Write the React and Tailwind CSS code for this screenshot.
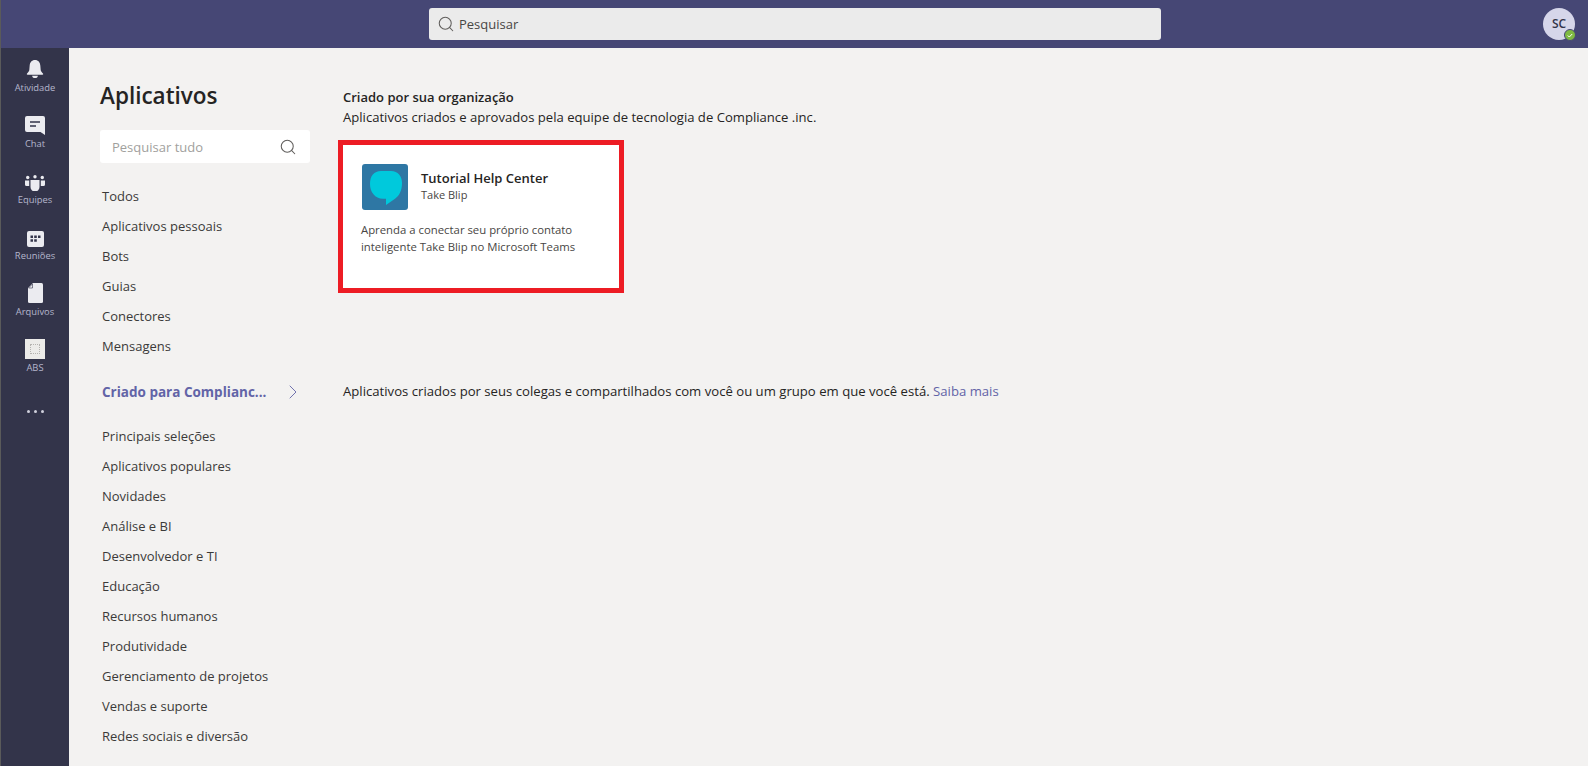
import React from "react";
import { Search, ChevronRight } from "lucide-react";

const Bell = () => (
  <svg width="18" height="19" viewBox="0 0 18 20" fill="#ebebf0"><path d="M9 0C5.600 0 3.600 2.600 3.400 5.800L3 10.500C2.900 12 1.600 13 .6 14.200c-.5.6-.3 1.300.5 1.300h15.800c.8 0 1-.7.5-1.300C16.400 13 15.100 12 15 10.500l-.4-4.700C14.400 2.600 12.400 0 9 0z"/><path d="M6 16.500h6c0 1.600-1.200 2.500-3 2.500s-3-.9-3-2.500z"/></svg>
);
const Chat = () => (
  <svg width="20" height="19" viewBox="0 0 20 19"><path d="M2 0h16a2 2 0 0 1 2 2v17l-4.500-3H2a2 2 0 0 1-2-2V2a2 2 0 0 1 2-2z" fill="#ebebf0"/><path d="M5 6h10M5 10h6" stroke="#33344a" strokeWidth="1.300"/></svg>
);
const Teams = () => (
  <svg width="20" height="16" viewBox="0 0 20 16" fill="#ebebf0"><circle cx="2.700" cy="2.500" r="1.700"/><circle cx="10" cy="1.700" r="1.700"/><circle cx="17.300" cy="2.500" r="1.700"/><path d="M0 5.500h4.200v5.500H1.500A1.500 1.500 0 0 1 0 9.500zM15.800 5.500H20v4a1.500 1.500 0 0 1-1.500 1.500h-2.700z"/><path d="M5.500 5h9v7a4.500 4.500 0 0 1-9 0z"/></svg>
);
const Calendar = () => (
  <svg width="17" height="17" viewBox="0 0 17 17" fill="none"><rect x="0" y="1" width="17" height="16" rx="2" fill="#ebebf0"/><path d="M3.500 5.500h2.500v2.500H3.500zM7.200 5.500h2.600v2.500H7.200zM11 5.500h2.500v2.500H11zM3.500 9.200h2.500v2.600H3.500zM7.200 9.200h2.600v2.600H7.200z" fill="#33344a"/></svg>
);
const File = () => (
  <svg width="15" height="20" viewBox="0 0 15 20"><path d="M5 0h8.500A1.500 1.500 0 0 1 15 1.500v17a1.500 1.500 0 0 1-1.500 1.500h-12A1.500 1.500 0 0 1 0 18.500V5z" fill="#ebebf0"/><path d="M4.500 1v4h-4z" fill="#ebebf0" stroke="#33344a" strokeWidth=".6"/></svg>
);
const Abs = () => (
  <div className="w-5 h-5 bg-[#ecebe9] flex items-center justify-center">
    <div className="w-[10px] h-[10px] border border-dotted border-[#b5b3b0]"></div>
  </div>
);

const RailItem = ({ icon, label }) => (
  <div className="h-[56px] flex flex-col items-center justify-start">
    <div className="h-[20px] flex items-end justify-center">{icon}</div>
    <span className="mt-[2px] text-[9.400px] leading-[14px] text-[#b5b6cc]">{label}</span>
  </div>
);

const Nav = ({ children }) => (
  <div className="h-[30px] flex items-center pl-[2px] text-[13px] text-[#3b3a39]">{children}</div>
);

export default function App() {
  const top = ["Todos", "Aplicativos pessoais", "Bots", "Guias", "Conectores", "Mensagens"];
  const cats = ["Principais seleções", "Aplicativos populares", "Novidades", "Análise e BI", "Desenvolvedor e TI", "Educação", "Recursos humanos", "Produtividade", "Gerenciamento de projetos", "Vendas e suporte", "Redes sociais e diversão"];
  return (
    <div className="w-[1588px] h-[766px] overflow-hidden flex flex-col bg-[#f3f2f1] font-['Open_Sans',sans-serif]">
      <header className="h-[48px] shrink-0 bg-[#464775] border-l border-[#5a5a5a] flex items-center relative">
        <div className="ml-[428px] w-[732px] h-[32px] bg-[#ebebeb] rounded-[3px] flex items-center pl-[8px] gap-[4px]">
          <Search size={18} strokeWidth={1.400} className="text-[#605e5c]" />
          <span className="text-[13px] leading-[20px] text-[#484644]">Pesquisar</span>
        </div>
        <div className="absolute right-[13px] top-[8px] w-8 h-8 rounded-full bg-[#d6d6ea] flex items-center justify-center text-[12px] font-semibold text-[#33344a]">
          SC
          <div className="absolute right-[-1px] bottom-[-1px] w-[12px] h-[12px] rounded-full bg-[#7fba42] border border-[#464775] flex items-center justify-center">
            <svg width="6" height="5" viewBox="0 0 6 5" fill="none"><path d="M.8 2.500l1.500 1.500L5.200 1" stroke="#fff" strokeWidth="1"/></svg>
          </div>
        </div>
      </header>
      <div className="flex-1 flex min-h-0">
        <nav className="w-[69px] shrink-0 bg-[#33344a] border-l border-[#5a5a5a] pt-[11px] flex flex-col">
          <RailItem icon={<Bell />} label="Atividade" />
          <RailItem icon={<Chat />} label="Chat" />
          <RailItem icon={<Teams />} label="Equipes" />
          <RailItem icon={<Calendar />} label="Reuniões" />
          <RailItem icon={<File />} label="Arquivos" />
          <RailItem icon={<Abs />} label="ABS" />
          <div className="mt-[15px] flex justify-center gap-[4px]">
            <span className="w-[3px] h-[3px] rounded-full bg-[#d0d0dc]"></span>
            <span className="w-[3px] h-[3px] rounded-full bg-[#d0d0dc]"></span>
            <span className="w-[3px] h-[3px] rounded-full bg-[#d0d0dc]"></span>
          </div>
        </nav>
        <aside className="w-[274px] shrink-0 pl-[31px] pt-[30px]">
          <h1 className="text-[22.500px] leading-[36px] font-semibold text-[#252423]">Aplicativos</h1>
          <div className="mt-[16px] w-[210px] h-[33px] bg-white rounded-[3px] flex items-center justify-between pl-[12px] pr-[13px]">
            <span className="text-[13px] leading-[20px] pt-[1px] text-[#a19f9d]">Pesquisar tudo</span>
            <Search size={18} strokeWidth={1.400} className="text-[#605e5c]" />
          </div>
          <div className="mt-[19px]">
            {top.map((t) => <Nav key={t}>{t}</Nav>)}
          </div>
          <div className="mt-[15px] h-[30px] flex items-center pl-[2px] w-[205px] justify-between text-[13.500px] font-bold text-[#6264a7]">
            <span>Criado para Complianc...</span>
            <ChevronRight size={24} strokeWidth={0.900} className="text-[#6264a7]" />
          </div>
          <div className="mt-[15px]">
            {cats.map((t) => <Nav key={t}>{t}</Nav>)}
          </div>
        </aside>
        <main className="flex-1 pt-[39px]">
          <div className="text-[13px] leading-[20px] font-semibold text-[#252423]">Criado por sua organização</div>
          <div className="text-[13.100px] leading-[20px] text-[#252423]">Aplicativos criados e aprovados pela equipe de tecnologia de Compliance .inc.</div>
          <div className="mt-[13px] -ml-[5px] w-[286px] h-[153px] border-[5px] border-[#ed1c24] bg-white pl-[19px] pt-[19px]">
            <div className="flex items-center gap-[13px]">
              <div className="w-[46px] h-[46px] rounded-[3px] bg-[#2e77a4] flex items-start justify-start pl-[8px] pt-[6px]">
                <svg width="32" height="35" viewBox="0 0 32 35"><path d="M11 1h10C28 1 32 6 32 13c0 8-3 13-7 15.700L16 35v-6.300h-3C5 28.700 0 22 0 14 0 6 4 1 11 1z" fill="#00c9dc"/></svg>
              </div>
              <div className="-mt-[2px]">
                <div className="text-[13px] leading-[18px] font-semibold text-[#252423]">Tutorial Help Center</div>
                <div className="text-[11px] leading-[16px] text-[#484644]">Take Blip</div>
              </div>
            </div>
            <div className="mt-[11px] text-[11.350px] leading-[17px] text-[#484644] -ml-[1px]">
              <div>Aprenda a conectar seu próprio contato</div>
              <div>inteligente Take Blip no Microsoft Teams</div>
            </div>
          </div>
          <div className="mt-[88px] text-[13.150px] leading-[20px] text-[#252423]">
            Aplicativos criados por seus colegas e compartilhados com você ou um grupo em que você está. <span className="text-[#6264a7]">Saiba mais</span>
          </div>
        </main>
      </div>
    </div>
  );
}
